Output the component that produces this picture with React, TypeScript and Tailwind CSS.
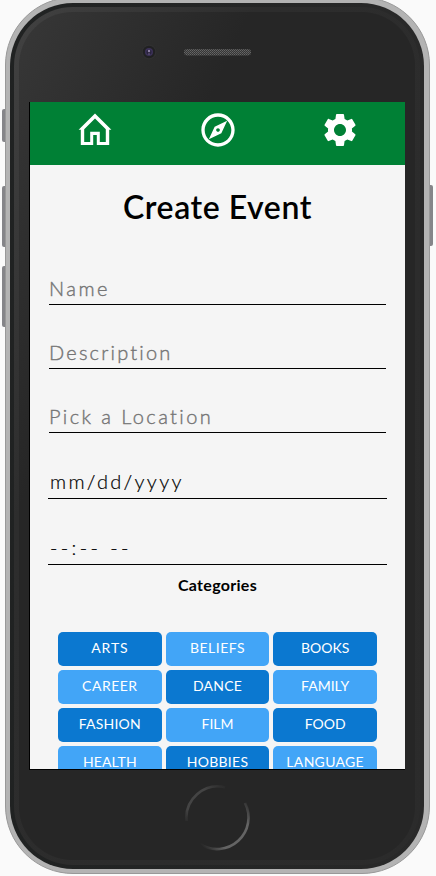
import { MdOutlineExplore, MdSettings } from "react-icons/md";

const categories = [
  { name: "ARTS", spacing: "tracking-[0.9px]" },
  { name: "BELIEFS", spacing: "tracking-[0.5px]" },
  { name: "BOOKS", spacing: "tracking-normal" },
  { name: "CAREER", spacing: "tracking-[0.5px]" },
  { name: "DANCE", spacing: "tracking-[0.2px]" },
  { name: "FAMILY", spacing: "tracking-normal" },
  { name: "FASHION", spacing: "tracking-[0.2px]" },
  { name: "FILM", spacing: "tracking-normal" },
  { name: "FOOD", spacing: "tracking-normal" },
  { name: "HEALTH", spacing: "tracking-[0.1px]" },
  { name: "HOBBIES", spacing: "tracking-[0.3px]" },
  { name: "LANGUAGE", spacing: "tracking-[0.3px]" },
];

function HomeIcon() {
  return (
    <svg width="40" height="40" viewBox="0 0 40 40" fill="#fff">
      <path
        fillRule="evenodd"
        d="M20 3.4 36.4 19.8H34.2V35.1H21.8V25h-3.6v10.1H5.8V19.8H3.6ZM20 8.4 9.2 19.2V32h6V21.8h9.6V32h6V19.2Z"
      />
    </svg>
  );
}

function NavBar() {
  return (
    <nav className="grid h-[63px] shrink-0 grid-cols-3 justify-items-center bg-[#008035] px-[3.75px] pt-2 text-white">
      <HomeIcon />
      <MdOutlineExplore size={40} />
      <MdSettings size={40} />
    </nav>
  );
}

function Earpiece() {
  return (
    <div className="flex h-[90px] shrink-0 items-start pt-[32px] pl-[121px]">
      <svg width="116" height="16" viewBox="0 0 116 16">
        <defs>
          <pattern id="mesh" width="2" height="2" patternUnits="userSpaceOnUse">
            <rect width="2" height="2" fill="#363636" />
            <rect width="1" height="1" fill="#666" />
            <rect x="1" y="1" width="1" height="1" fill="#5a5a5a" />
          </pattern>
        </defs>
        <circle cx="9" cy="8" r="7.5" fill="#303030" />
        <circle cx="9" cy="8" r="6.2" fill="#202022" />
        <circle cx="9" cy="8" r="4" fill="#3b3158" />
        <circle cx="9" cy="8" r="2.5" fill="#29233c" />
        <circle cx="9" cy="7" r="1.2" fill="#8f83a5" />
        <circle cx="9" cy="10" r="0.8" fill="#74678d" />
        <rect x="44" y="5" width="67" height="6.5" rx="3.2" fill="url(#mesh)" />
      </svg>
    </div>
  );
}

function HomeButton() {
  return (
    <svg className="mt-[14px] ml-[164.5px] shrink-0" width="68" height="68" viewBox="0 0 68 68" fill="none" strokeWidth="2.6">
      <defs>
        <linearGradient id="arcTop" x1="0" y1="38" x2="42" y2="0" gradientUnits="userSpaceOnUse">
          <stop offset="0" stopColor="#262626" />
          <stop offset="0.2" stopColor="#444" />
          <stop offset="0.65" stopColor="#444" />
          <stop offset="1" stopColor="#262626" />
        </linearGradient>
        <linearGradient id="arcBottom" x1="18" y1="62" x2="68" y2="20" gradientUnits="userSpaceOnUse">
          <stop offset="0" stopColor="#262626" />
          <stop offset="0.25" stopColor="#646464" />
          <stop offset="0.75" stopColor="#646464" />
          <stop offset="1" stopColor="#262626" />
        </linearGradient>
      </defs>
      <path d="M2.5 37A31.6 31.6 0 0 1 41 3.2" stroke="url(#arcTop)" />
      <path d="M16 60.2A31.6 31.6 0 0 0 61 19" stroke="url(#arcBottom)" />
    </svg>
  );
}

function EventForm() {
  return (
    <div className="flex flex-col text-xl leading-6 font-light text-[#757575] [-webkit-text-stroke:0.4px_currentColor]">
      <div className="mx-[19px] h-[29px] w-[337px] border-b border-black tracking-[2.5px]">Name</div>
      <div className="mx-[19px] mt-[35px] h-[29px] w-[337px] border-b border-black tracking-[2.2px]">Description</div>
      <div className="mx-[19px] mt-[35px] h-[29px] w-[337px] border-b border-black tracking-[2.4px]">Pick a Location</div>
      <div className="mx-[18px] mt-[36px] h-[30px] w-[339px] border-b border-black pl-[2px] tracking-[2.3px] text-black [-webkit-text-stroke:0.2px_currentColor]">mm/dd/yyyy</div>
      <div className="mx-[18px] mt-[36px] h-[30px] w-[339px] border-b border-black pl-[2px] tracking-[3.4px] text-black [-webkit-text-stroke:0.2px_currentColor]">--:-- --</div>
    </div>
  );
}

export default function App() {
  return (
    <div className="h-[876px] w-[436px] overflow-hidden bg-[#fafafa] font-[Lato,'Open_Sans',sans-serif]">
      <div className="relative -mt-[3px] ml-[5px] h-[877px] w-[425px]">
        <div className="absolute top-[112px] -left-[3px] h-[33px] w-[3px] rounded-l-[2px] bg-[#858589]" />
        <div className="absolute top-[189px] -left-[3px] h-[61px] w-[3px] rounded-l-[2px] bg-[#858589]" />
        <div className="absolute top-[269px] -left-[3px] h-[61px] w-[3px] rounded-l-[2px] bg-[#858589]" />
        <div className="absolute top-[188px] -right-[3px] h-[61px] w-[3px] rounded-r-[2px] bg-[#858589]" />
        <div className="h-full rounded-[68px] border border-[#989898] bg-[#b3b3b3] pt-[5px] pr-[5px] pb-1 pl-1">
          <div className="h-full rounded-[63px] bg-linear-to-r from-[#202222] to-[#292929] p-1">
            <div className="h-full rounded-[59px] bg-linear-to-br from-[#424242] via-[#2d2d2d] via-30% to-[#2b2b2b] p-[5px]">
              <div className="flex h-full flex-col rounded-[54px] bg-[#262626] bg-[linear-gradient(115deg,#373737_0px,#262626_210px)]">
                <Earpiece />
                <main className="ml-[10px] flex h-[668px] w-[376px] shrink-0 flex-col overflow-hidden border-b border-l border-black bg-[#f5f5f5] text-black">
                  <NavBar />
                  <h1 className="mt-[22px] mb-[49px] h-10 shrink-0 text-center text-[32px] leading-10 font-semibold tracking-[0.55px]">Create Event</h1>
                  <EventForm />
                  <h2 className="mt-[10px] mb-[37px] h-5 shrink-0 text-center text-[16px] leading-5 font-bold tracking-[0.3px]">Categories</h2>
                  <div className="ml-[28px] grid w-[319px] shrink-0 grid-cols-3 gap-1">
                    {categories.map(({ name, spacing }, i) => (
                      <button
                        key={name}
                        className={
                          (i % 2 === 0 ? "bg-[#0b78d0] " : "bg-[#42a5f7] ") +
                          spacing +
                          " h-[34px] rounded-[5px] pb-[3px] text-center text-[14px] leading-5 text-white"
                        }
                      >
                        {name}
                      </button>
                    ))}
                  </div>
                </main>
                <HomeButton />
              </div>
            </div>
          </div>
        </div>
      </div>
    </div>
  );
}
